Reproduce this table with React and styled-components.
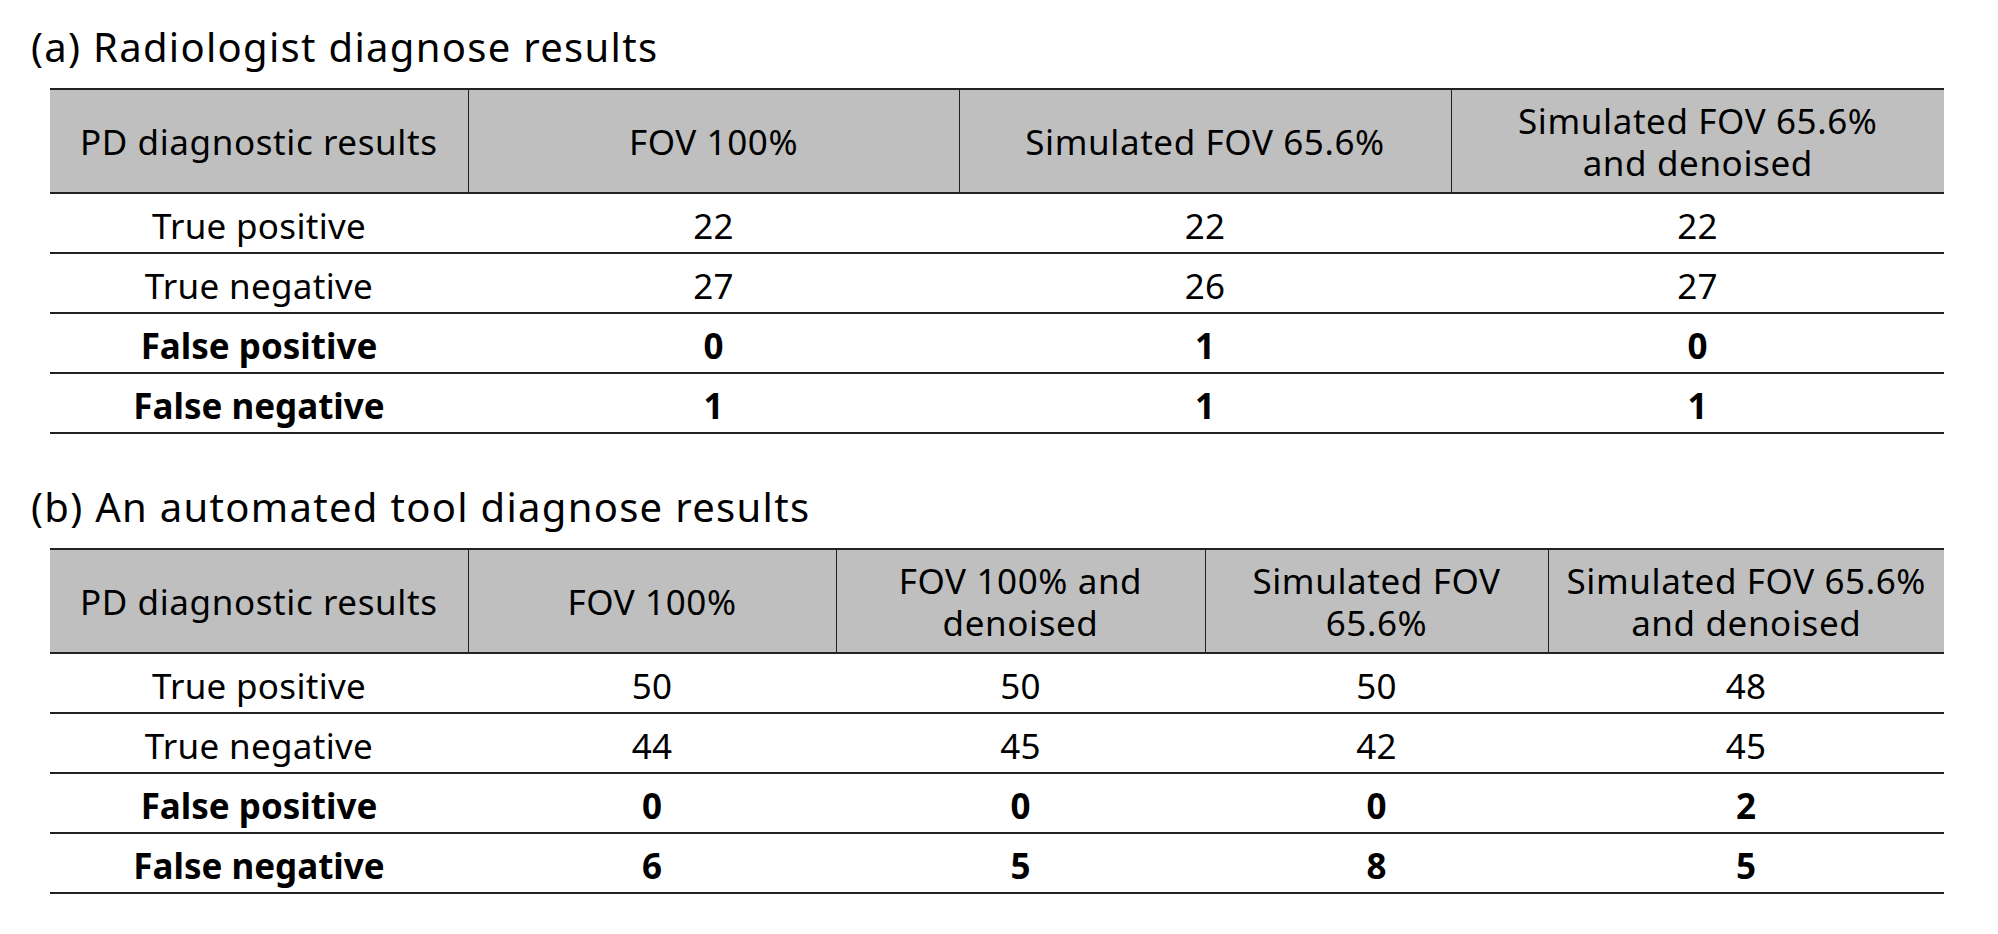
import React from "react";
import styled, { createGlobalStyle } from "styled-components";

const Global = createGlobalStyle`
  html, body { margin: 0; padding: 0; background: #ffffff; }
  body { font-family: "Noto Sans", "Noto Sans CJK KR", sans-serif; color: #000; }
`;

const Page = styled.div`
  padding: 28px 0 0 31px;
  display: flex;
  flex-direction: column;
`;

const Section = styled.section`
  display: flex;
  flex-direction: column;
  margin-bottom: ${(p) => p.$gap || 0}px;
`;

const Title = styled.h2`
  margin: 0 0 23px 0;
  font-size: 40px;
  line-height: 37px;
  font-weight: 400;
  letter-spacing: 1.3px;
`;

const Table = styled.table`
  margin-left: 19px;
  width: 1894px;
  table-layout: fixed;
  border-collapse: collapse;
  font-size: 35px;
`;

const HeadRow = styled.tr`
  height: 104px;
  background: #bfbfbf;
`;

const HeadCell = styled.th`
  font-weight: 400;
  line-height: 42px;
  letter-spacing: 0.6px;
  padding: 2px 2px 0 2px;
  text-align: center;
  vertical-align: middle;
  border-top: 2px solid #222;
  border-bottom: 2px solid #222;
  border-left: 1.5px solid #222;
  &:first-child { border-left: none; }
`;

const BodyRow = styled.tr`
  height: 60px;
`;

const Cell = styled.td`
  font-weight: ${(p) => (p.$bold ? 700 : 400)};
  line-height: 40px;
  letter-spacing: ${(p) => (p.$bold ? 0 : 0.3)}px;
  padding: 6px 0 0 0;
  text-align: center;
  vertical-align: middle;
  border-bottom: 2px solid #222;
`;

const tableA = {
  cols: [418, 491, 492, 493],
  head: ["PD diagnostic results", "FOV 100%", "Simulated FOV 65.6%", ["Simulated FOV 65.6%", "and denoised"]],
  rows: [
    ["True positive", "22", "22", "22"],
    ["True negative", "27", "26", "27"],
    ["False positive", "0", "1", "0"],
    ["False negative", "1", "1", "1"],
  ],
};

const tableB = {
  cols: [418, 368, 369, 343, 396],
  head: [
    "PD diagnostic results",
    "FOV 100%",
    ["FOV 100% and", "denoised"],
    ["Simulated FOV", "65.6%"],
    ["Simulated FOV 65.6%", "and denoised"],
  ],
  rows: [
    ["True positive", "50", "50", "50", "48"],
    ["True negative", "44", "45", "42", "45"],
    ["False positive", "0", "0", "0", "2"],
    ["False negative", "6", "5", "8", "5"],
  ],
};

function ResultTable({ data }) {
  return (
    <Table>
      <colgroup>
        {data.cols.map((w, i) => (
          <col key={i} style={{ width: w }} />
        ))}
      </colgroup>
      <thead>
        <HeadRow>
          {data.head.map((h, i) => (
            <HeadCell key={i}>
              {Array.isArray(h) ? (
                <>
                  {h[0]}
                  <br />
                  {h[1]}
                </>
              ) : (
                h
              )}
            </HeadCell>
          ))}
        </HeadRow>
      </thead>
      <tbody>
        {data.rows.map((r, ri) => (
          <BodyRow key={ri}>
            {r.map((c, ci) => (
              <Cell key={ci} $bold={ri >= 2}>
                {c}
              </Cell>
            ))}
          </BodyRow>
        ))}
      </tbody>
    </Table>
  );
}

export default function App() {
  return (
    <Page>
      <Global />
      <Section $gap={54}>
        <Title>(a) Radiologist diagnose results</Title>
        <ResultTable data={tableA} />
      </Section>
      <Section>
        <Title>(b) An automated tool diagnose results</Title>
        <ResultTable data={tableB} />
      </Section>
    </Page>
  );
}
